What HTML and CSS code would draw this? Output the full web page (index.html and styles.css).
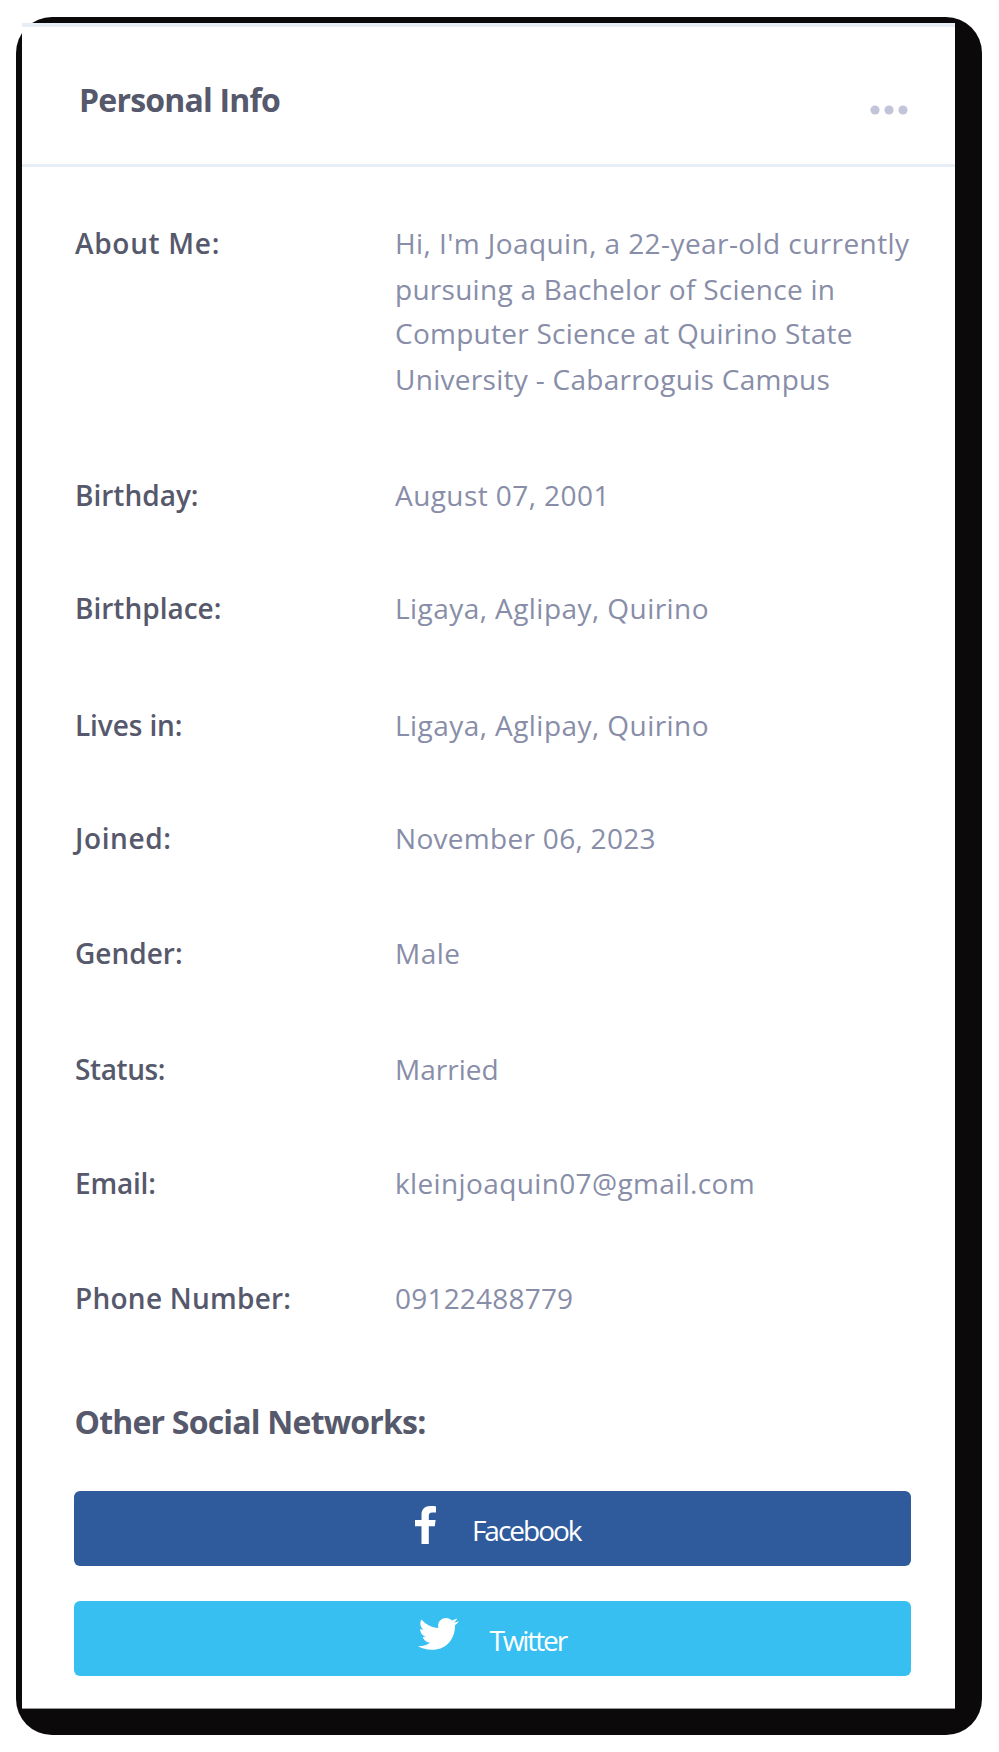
FILE: index.html
```html
<!DOCTYPE html>
<html lang="en">
<head>
<meta charset="utf-8">
<title>Personal Info</title>
<link rel="stylesheet" href="styles.css">
</head>
<body>
<div class="frame">
<main class="card">
<header class="card-header">
<h1 class="title">Personal Info</h1>
<svg class="more" width="38" height="10" viewBox="0 0 38 10"><circle cx="5" cy="5" r="4.6"/><circle cx="19" cy="5" r="4.6"/><circle cx="33" cy="5" r="4.6"/></svg>
</header>
<dl class="info">
<dt class="label l-about">About Me:</dt><dd class="value"><span class="line v-1">Hi, I'm Joaquin, a 22-year-old currently</span><span class="line v-2">pursuing a Bachelor of Science in</span><span class="line v-3">Computer Science at Quirino State</span><span class="line v-4">University - Cabarroguis Campus</span></dd>
<dt class="label drop-2">Birthday:</dt><dd class="value v-birthday drop-2">August 07, 2001</dd>
<dt class="label">Birthplace:</dt><dd class="value v-place">Ligaya, Aglipay, Quirino</dd>
<dt class="label l-lives drop-1">Lives in:</dt><dd class="value v-place drop-1">Ligaya, Aglipay, Quirino</dd>
<dt class="label l-joined">Joined:</dt><dd class="value v-joined">November 06, 2023</dd>
<dt class="label">Gender:</dt><dd class="value v-gender">Male</dd>
<dt class="label l-status drop-1">Status:</dt><dd class="value drop-1">Married</dd>
<dt class="label l-email">Email:</dt><dd class="value v-email">kleinjoaquin07@gmail.com</dd>
<dt class="label l-phone">Phone Number:</dt><dd class="value v-phone">09122488779</dd>
</dl>
<section class="social">
<h2 class="subtitle">Other Social Networks:</h2>
<a class="button facebook"><svg class="icon-fb" width="21" height="38" viewBox="0 0 21 38"><path d="M21 0.4V6.5H17.2C14.6 6.5 13.8 7.8 13.8 9.9V14H20.6L19.8 20.3H13.8V38H6.5V20.3H0V14H6.5V8.8C6.5 3.2 10 0 15.4 0C18 0 20.2.2 21 .4Z"/></svg><span class="button-text t-fb">Facebook</span></a>
<a class="button twitter"><svg class="icon-tw" width="41" height="32" viewBox="0 0 41 32"><path d="M41 3.3C39.6 5.2 38.2 6.5 37 7.3C37.3 20 29 31.5 15.5 31.7C9.800 32 4.500 30.800 0 28C4.500 28.300 8.700 27.200 12 24.700C8.500 24.400 5.800 22.300 4.700 19H8C4.500 17.900 2.200 15 2.200 11L5.600 12C2.200 9.200 1.500 5.300 3.400 1.600C8 6.700 13.600 9.700 20.400 10.100C19.100 4.200 23 0 28 0C30.400 0 32.500 1 34 2.600L39.200 .6C38.600 2.400 37.500 3.700 35.800 4.700Z"/></svg><span class="button-text t-tw">Twitter</span></a>
</section>
</main>
</div>
</body>
</html>
```
FILE: styles.css
```css
* { box-sizing: border-box; }
body {
  margin: 0;
  padding: 17px 17px 17px 16px;
  background: #fff;
  font-family: "Open Sans", "Noto Sans", sans-serif;
  font-size: 28px;
}
.frame {
  width: 966px;
  height: 1718px;
  padding: 6px 27px 26px 6px;
  border-radius: 36px;
  background: #0b090a;
}
.card {
  width: 933px;
  height: 1686px;
  border-top: 4px solid #e8eef5;
  border-bottom: 1px solid #999;
  background: #fff;
}
.card-header {
  display: flex;
  justify-content: space-between;
  align-items: center;
  height: 140px;
  padding: 0 47px 0 57px;
  border-bottom: 3px solid #e8eef6;
}
.title, .subtitle {
  margin: 0;
  color: #56586b;
  font-size: 32px;
  font-weight: 700;
  line-height: 44px;
  white-space: nowrap;
  letter-spacing: -.800px;
}
.more { margin-top: 29px; fill: #c2c5da; }
.title { padding-top: 9px; }
.info {
  display: grid;
  grid-template-columns: 320px 1fr;
  row-gap: 69.600px;
  margin: 0;
  padding: 53.500px 0 0 53px;
  line-height: 45.300px;
  white-space: nowrap;
}
.label { color: #56586b; font-weight: 600; }
.value { margin: 0; color: #888da8; }
.line { display: block; }
.drop-1 { padding-top: 1.500px; margin-bottom: -1.500px; }
.drop-2 { padding-top: 2px; margin-bottom: -2px; }
.l-about { letter-spacing: .7px; }
.l-lives { letter-spacing: -.1px; }
.l-joined { letter-spacing: .6px; }
.l-status { letter-spacing: -.4px; }
.l-email { letter-spacing: -.2px; }
.l-phone { letter-spacing: .25px; }
.v-1 { letter-spacing: .42px; }
.v-2 { padding-top: 1px; margin-bottom: -1px; letter-spacing: .27px; }
.v-3 { letter-spacing: .25px; }
.v-4 { padding-top: 1px; margin-bottom: -1px; letter-spacing: .29px; }
.v-birthday { letter-spacing: .43px; }
.v-place { letter-spacing: .44px; }
.v-joined { letter-spacing: .3px; }
.v-gender { letter-spacing: .5px; }
.v-email { letter-spacing: .37px; }
.v-phone { letter-spacing: .2px; }
.social { padding: 79px 44px 0 51.500px; }
.subtitle { padding-left: 1px; }
.button {
  display: flex;
  justify-content: center;
  height: 75px;
  border-radius: 6px;
  color: #fff;
  line-height: 75px;
}
.button svg { fill: #fff; }
.facebook { margin-top: 47px; padding-left: 11px; background: #2f5b9d; }
.twitter { margin-top: 35px; background: #38bff1; }
.icon-fb { margin: 15px 36px 0 0; }
.icon-tw { margin: 17px 30px 0 0; }
.button-text { padding-top: 2px; }
.t-fb { letter-spacing: -2px; }
.t-tw { letter-spacing: -2.100px; }
```
